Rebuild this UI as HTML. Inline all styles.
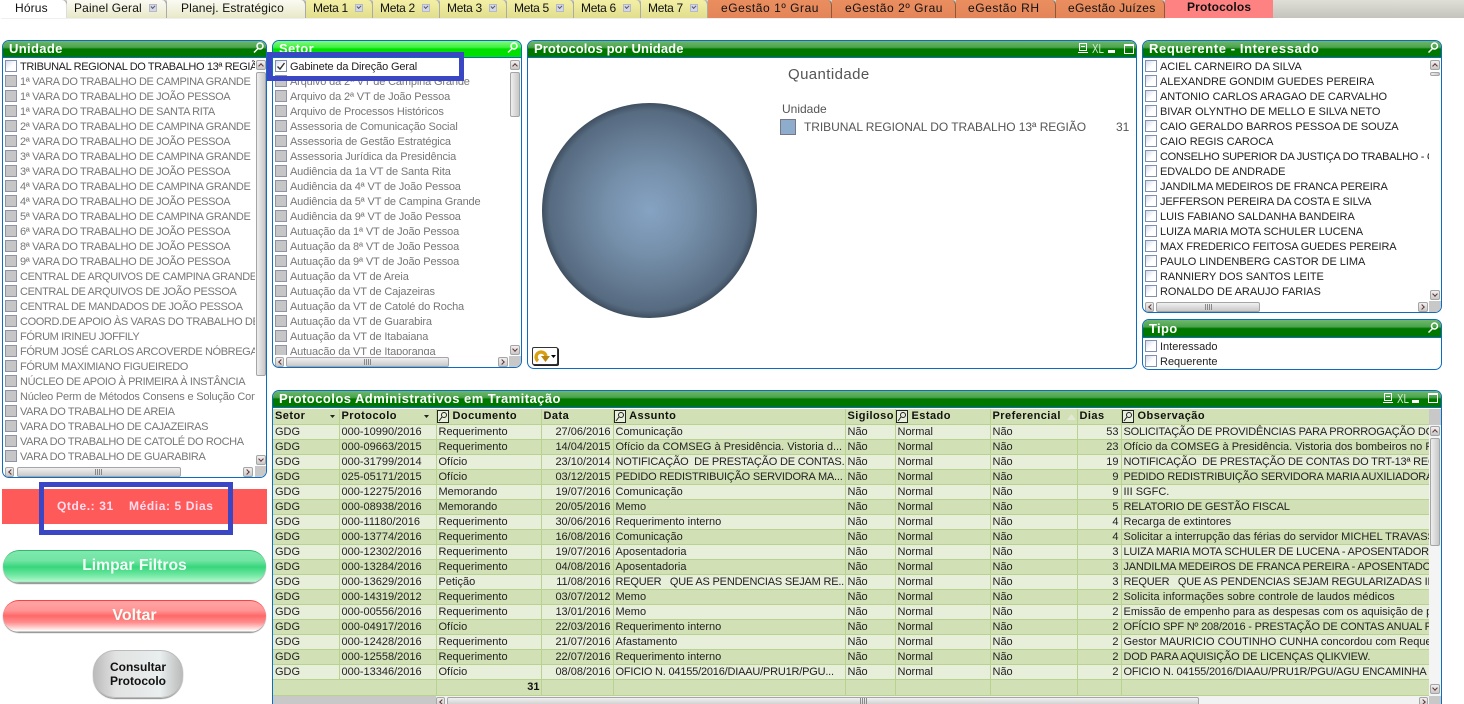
<!DOCTYPE html>
<html><head><meta charset="utf-8"><style>
html,body{margin:0;padding:0;width:1464px;height:704px;overflow:hidden;background:#fff;font-family:"Liberation Sans",sans-serif;font-size:11px;color:#222}
div{box-sizing:border-box}
.a{position:absolute}
.tab{position:absolute;top:0;height:18px;line-height:17px;font-size:12px;color:#111;white-space:nowrap;border-radius:0 5px 0 0;border-right:1px solid #aaa;box-shadow:1px 0 1px #999;letter-spacing:.15px}
.tab i{position:absolute;top:4px;width:8px;height:8px;background:#d4d8e6;border:1px solid #b4b8c8;box-sizing:border-box}
.tab i:after{content:"";position:absolute;left:1px;top:0;width:3px;height:2px;border-left:1px solid #556;border-bottom:1px solid #556;transform:rotate(-45deg)}
.p{background:linear-gradient(#fbfbf3,#e8e8c8)}.m{background:linear-gradient(#f3f0a6,#e2de8e);letter-spacing:-.3px}.e{background:linear-gradient(#ea8e60,#e38558);letter-spacing:.55px;border-right:1px solid #8a5a3a}
.panel{position:absolute;border:1px solid #0b6cc0;border-radius:7px;overflow:hidden;background:rgba(255,255,255,.9)}
.cap{position:absolute;left:0;right:0;top:0;height:17px;background:linear-gradient(#6db76d 0,#4ca34c 40%,#007800 50%,#007800 100%);border-bottom:1px solid #0b6cc0;color:#fff;font-weight:bold;font-size:13px;line-height:16px;padding-left:6px;letter-spacing:.35px;white-space:nowrap}
.cap.g{background:linear-gradient(#80fa80 0,#40f040 40%,#00e000 50%,#00e000 100%)}
.list{position:absolute;left:0;top:18px;overflow:hidden}
.r{position:relative;height:15px;line-height:16px;padding-left:17px;white-space:nowrap;color:#222}
.r:before{content:"";position:absolute;left:2px;top:1px;width:12px;height:12px;border:1px solid #7f8fae;background:linear-gradient(135deg,#d4daea,#fff 55%);box-sizing:border-box}
.x{color:#777}.x:before{background:#c6c6c6;border-color:#8c94a6}
.sb{position:absolute;background:linear-gradient(#f1f1f1,#c8c8c8);border:1px solid #a5a5a5;border-radius:2px}
.sv{position:absolute;background:linear-gradient(90deg,#eee,#c8c8c8);border:1px solid #a5a5a5;border-radius:2px}
.up:after,.dn:after,.lf:after,.rt:after{content:"";position:absolute;left:2px;top:3px;width:3px;height:3px;border-top:1px solid #633;border-left:1px solid #633}
.up:after{transform:rotate(45deg)}.dn:after{transform:rotate(225deg);top:1px}.lf:after{transform:rotate(-45deg);left:3px;top:2px}.rt:after{transform:rotate(135deg);left:1px;top:2px}
table{border-collapse:collapse;table-layout:fixed;position:absolute;left:0;top:18px;width:1156px}
td{height:15px;padding:0 1px 0 2px;overflow:hidden;white-space:pre;border-right:1px solid #b9d28f;border-bottom:1px solid #b9d28f;line-height:14px;color:#222;box-sizing:border-box}
tr:nth-child(even) td{background:#e7eed9}tr:nth-child(odd) td{background:#d2e0b5}
tr.h td{background:#d2e0b5;font-weight:bold;color:#111;letter-spacing:.45px}
tr.t td{background:#d2e0b5;height:16px;font-weight:bold;text-align:right;color:#111}
td.n{text-align:right;padding-right:2px}
td.u{letter-spacing:-.2px}
.blue{position:absolute;border:5px solid #3b46c4}
.btn{position:absolute;text-align:center;color:#f4fff8;font-size:15.7px;font-weight:bold;border-radius:17px;box-shadow:0 1px 1px #888}
</style></head><body>

<div class="a" style="left:0;top:0;width:1464px;height:18px;background:linear-gradient(#dfdfd8,#c4c4bc)"></div>
<div class="tab" style="left:0;width:67px;background:#fff;padding-left:15px;border-color:#ddd">Hórus</div>
<div class="tab p" style="left:67px;width:100px;padding-left:7px">Painel Geral<i style="left:82px"></i></div>
<div class="tab p" style="left:167px;width:139px;padding-left:14px">Planej. Estratégico</div>
<div class="tab m" style="left:306px;width:67px;padding-left:7px">Meta 1<i style="left:49px"></i></div>
<div class="tab m" style="left:373px;width:67px;padding-left:7px">Meta 2<i style="left:49px"></i></div>
<div class="tab m" style="left:440px;width:67px;padding-left:7px">Meta 3<i style="left:49px"></i></div>
<div class="tab m" style="left:507px;width:67px;padding-left:7px">Meta 5<i style="left:49px"></i></div>
<div class="tab m" style="left:574px;width:67px;padding-left:7px">Meta 6<i style="left:49px"></i></div>
<div class="tab m" style="left:641px;width:67px;padding-left:7px">Meta 7<i style="left:49px"></i></div>
<div class="tab e" style="left:708px;width:124px;padding-left:13px">eGestão 1º Grau</div>
<div class="tab e" style="left:832px;width:124px;padding-left:13px">eGestão 2º Grau</div>
<div class="tab e" style="left:956px;width:100px;padding-left:12px">eGestão RH</div>
<div class="tab e" style="left:1056px;width:109px;padding-left:12px;letter-spacing:.3px">eGestão Juízes</div>
<div class="tab" style="left:1165px;width:108px;background:#ff8282;padding-left:22px;font-weight:bold;border:0;box-shadow:none;border-radius:0;line-height:15px">Protocolos</div>

<!-- Unidade -->
<div class="panel" style="left:2px;top:40px;width:265px;height:438px">
<div class="cap">Unidade</div>
<div class="list" style="width:252px;height:408px;letter-spacing:-.38px">
<div class="r">TRIBUNAL REGIONAL DO TRABALHO 13ª REGIÃO</div>
<div class="r x">1ª VARA DO TRABALHO DE CAMPINA GRANDE</div>
<div class="r x">1ª VARA DO TRABALHO DE JOÃO PESSOA</div>
<div class="r x">1ª VARA DO TRABALHO DE SANTA RITA</div>
<div class="r x">2ª VARA DO TRABALHO DE CAMPINA GRANDE</div>
<div class="r x">2ª VARA DO TRABALHO DE JOÃO PESSOA</div>
<div class="r x">3ª VARA DO TRABALHO DE CAMPINA GRANDE</div>
<div class="r x">3ª VARA DO TRABALHO DE JOÃO PESSOA</div>
<div class="r x">4ª VARA DO TRABALHO DE CAMPINA GRANDE</div>
<div class="r x">4ª VARA DO TRABALHO DE JOÃO PESSOA</div>
<div class="r x">5ª VARA DO TRABALHO DE CAMPINA GRANDE</div>
<div class="r x">6ª VARA DO TRABALHO DE JOÃO PESSOA</div>
<div class="r x">8ª VARA DO TRABALHO DE JOÃO PESSOA</div>
<div class="r x">9ª VARA DO TRABALHO DE JOÃO PESSOA</div>
<div class="r x">CENTRAL DE ARQUIVOS DE CAMPINA GRANDE</div>
<div class="r x">CENTRAL DE ARQUIVOS DE JOÃO PESSOA</div>
<div class="r x">CENTRAL DE MANDADOS DE JOÃO PESSOA</div>
<div class="r x">COORD.DE APOIO ÀS VARAS DO TRABALHO DE</div>
<div class="r x">FÓRUM IRINEU JOFFILY</div>
<div class="r x">FÓRUM JOSÉ CARLOS ARCOVERDE NÓBREGA</div>
<div class="r x">FÓRUM MAXIMIANO FIGUEIREDO</div>
<div class="r x">NÚCLEO DE APOIO À PRIMEIRA À INSTÂNCIA</div>
<div class="r x" style="letter-spacing:-.2px">Núcleo Perm de Métodos Consens e Solução Con</div>
<div class="r x">VARA DO TRABALHO DE AREIA</div>
<div class="r x">VARA DO TRABALHO DE CAJAZEIRAS</div>
<div class="r x">VARA DO TRABALHO DE CATOLÉ DO ROCHA</div>
<div class="r x">VARA DO TRABALHO DE GUARABIRA</div>
</div>
<div class="sb up" style="left:253px;top:19px;width:10px;height:10px"></div>
<div class="sv" style="left:253px;top:31px;width:10px;height:304px"></div>
<div class="sb dn" style="left:253px;top:414px;width:10px;height:10px"></div>
<div class="sb lf" style="left:2px;top:426px;width:9px;height:10px"></div>
<div class="sb" style="left:14px;top:426px;width:164px;height:10px"></div>
<div class="sb rt" style="left:240px;top:426px;width:10px;height:10px"></div>
<div class="a" style="left:252px;top:425px;width:13px;height:13px;background:#c8c8c8"></div>
</div>

<!-- Setor -->
<div class="panel" style="left:272px;top:40px;width:250px;height:328px">
<div class="cap g">Setor</div>
<div class="list" style="width:236px;height:296px;letter-spacing:-.15px">
<div class="r">Gabinete da Direção Geral<svg class="a" style="left:3px;top:2px" width="10" height="10"><path d="M1.500 5.500l2.500 2.500L8.500 2" fill="none" stroke="#333" stroke-width="1.400"/></svg></div>
<div class="r x">Arquivo da 2ª VT de Campina Grande</div>
<div class="r x">Arquivo da 2ª VT de João Pessoa</div>
<div class="r x">Arquivo de Processos Históricos</div>
<div class="r x">Assessoria de Comunicação Social</div>
<div class="r x">Assessoria de Gestão Estratégica</div>
<div class="r x">Assessoria Jurídica da Presidência</div>
<div class="r x">Audiência da 1a VT de Santa Rita</div>
<div class="r x">Audiência da 4ª VT de João Pessoa</div>
<div class="r x">Audiência da 5ª VT de Campina Grande</div>
<div class="r x">Audiência da 9ª VT de João Pessoa</div>
<div class="r x">Autuação da 1ª VT de João Pessoa</div>
<div class="r x">Autuação da 8ª VT de João Pessoa</div>
<div class="r x">Autuação da 9ª VT de João Pessoa</div>
<div class="r x">Autuação da VT de Areia</div>
<div class="r x">Autuação da VT de Cajazeiras</div>
<div class="r x">Autuação da VT de Catolé do Rocha</div>
<div class="r x">Autuação da VT de Guarabira</div>
<div class="r x">Autuação da VT de Itabaiana</div>
<div class="r x">Autuação da VT de Itaporanga</div>
</div>
<div class="sb up" style="left:237px;top:19px;width:10px;height:10px"></div>
<div class="sv" style="left:237px;top:31px;width:10px;height:45px"></div>
<div class="sb dn" style="left:237px;top:304px;width:10px;height:10px"></div>
<div class="sb lf" style="left:2px;top:316px;width:9px;height:10px"></div>
<div class="sb" style="left:13px;top:316px;width:163px;height:10px"></div>
<div class="sb rt" style="left:225px;top:316px;width:10px;height:10px"></div>
<div class="a" style="left:236px;top:315px;width:13px;height:13px;background:#c8c8c8"></div>
</div>

<!-- Protocolos por Unidade -->
<div class="panel" style="left:527px;top:40px;width:610px;height:329px">
<div class="cap" style="letter-spacing:.1px">Protocolos por Unidade</div>
<div class="a" style="left:14px;top:62px;width:215px;height:215px;border-radius:50%;background:radial-gradient(circle closest-side at 50% 50%,#86a3c3 0,#7690ab 40%,#62788f 75%,#566a80 93%,#3f4f60 100%)"></div>
<div class="a" style="left:260px;top:25px;font-size:15px;color:#555;letter-spacing:.4px">Quantidade</div>
<div class="a" style="left:254px;top:61px;font-size:12px;color:#555">Unidade</div>
<div class="a" style="left:252px;top:78px;width:16px;height:16px;background:#8eaccc;border:1px solid #778"></div>
<div class="a" style="left:276px;top:79px;font-size:12px;color:#555;white-space:nowrap;letter-spacing:-.05px">TRIBUNAL REGIONAL DO TRABALHO 13ª REGIÃO</div>
<div class="a" style="left:588px;top:79px;font-size:12px;color:#555">31</div>
<div class="a" style="left:4px;top:306px;width:26px;height:18px;background:#fff;border:1px solid #333;border-radius:2px;box-shadow:1px 1px 0 #222"></div>
<svg class="a" style="left:5px;top:307px" width="24" height="17"><path d="M5 13a5 5 0 1 1 8-5" fill="none" stroke="#d9a012" stroke-width="3.400"/><path d="M8 8h9l-4.500 6z" fill="#b9850c"/><path d="M18 7h5l-2.500 3z" fill="#000"/></svg>
</div>

<!-- Requerente -->
<div class="panel" style="left:1142px;top:40px;width:300px;height:273px">
<div class="cap" style="letter-spacing:.6px">Requerente - Interessado</div>
<div class="list" style="width:286px;height:240px;letter-spacing:-.05px">
<div class="r">ACIEL CARNEIRO DA SILVA</div>
<div class="r">ALEXANDRE GONDIM GUEDES PEREIRA</div>
<div class="r">ANTONIO CARLOS ARAGAO DE CARVALHO</div>
<div class="r">BIVAR OLYNTHO DE MELLO E SILVA NETO</div>
<div class="r">CAIO GERALDO BARROS PESSOA DE SOUZA</div>
<div class="r">CAIO REGIS CAROCA</div>
<div class="r" style="letter-spacing:-.3px">CONSELHO SUPERIOR DA JUSTIÇA DO TRABALHO - CS...</div>
<div class="r">EDVALDO DE ANDRADE</div>
<div class="r" style="letter-spacing:-.15px">JANDILMA MEDEIROS DE FRANCA PEREIRA</div>
<div class="r" style="letter-spacing:-.15px">JEFFERSON PEREIRA DA COSTA E SILVA</div>
<div class="r">LUIS FABIANO SALDANHA BANDEIRA</div>
<div class="r">LUIZA MARIA MOTA SCHULER LUCENA</div>
<div class="r" style="letter-spacing:-.15px">MAX FREDERICO FEITOSA GUEDES PEREIRA</div>
<div class="r">PAULO LINDENBERG CASTOR DE LIMA</div>
<div class="r">RANNIERY DOS SANTOS LEITE</div>
<div class="r">RONALDO DE ARAUJO FARIAS</div>
</div>
<div class="sb up" style="left:287px;top:19px;width:10px;height:10px"></div>
<div class="sv" style="left:287px;top:31px;width:10px;height:4px"></div>
<div class="sb dn" style="left:287px;top:249px;width:10px;height:10px"></div>
<div class="sb lf" style="left:2px;top:261px;width:9px;height:10px"></div>
<div class="sb" style="left:13px;top:261px;width:104px;height:10px"></div>
<div class="sb rt" style="left:275px;top:261px;width:10px;height:10px"></div>
<div class="a" style="left:286px;top:260px;width:13px;height:13px;background:#c8c8c8"></div>
</div>

<!-- Tipo -->
<div class="panel" style="left:1142px;top:319px;width:300px;height:51px">
<div class="cap" style="height:18px;line-height:18px">Tipo</div>
<div class="list" style="width:298px;height:31px;top:19px">
<div class="r">Interessado</div>
<div class="r">Requerente</div>
</div>
</div>

<!-- Tabela -->
<div class="panel" style="left:272px;top:390px;width:1170px;height:314px;border-radius:7px 7px 0 0;border-bottom:0">
<div class="cap" style="letter-spacing:.45px">Protocolos Administrativos em Tramitação</div>
<table>
<colgroup><col style="width:66px"><col style="width:97px"><col style="width:105px"><col style="width:72px"><col style="width:232px"><col style="width:50px"><col style="width:95px"><col style="width:87px"><col style="width:44px"><col style="width:308px"></colgroup>
<tr class="h"><td>Setor</td><td>Protocolo</td><td>    Documento</td><td>Data</td><td>    Assunto</td><td>Sigiloso</td><td>    Estado</td><td>Preferencial</td><td>Dias</td><td>    Observação</td></tr>
<tr><td>GDG</td><td>000-10990/2016</td><td>Requerimento</td><td class="n">27/06/2016</td><td>Comunicação</td><td>Não</td><td>Normal</td><td>Não</td><td class="n">53</td><td class="u">SOLICITAÇÃO DE PROVIDÊNCIAS PARA PRORROGAÇÃO DO CONTRATO</td></tr>
<tr><td>GDG</td><td>000-09663/2015</td><td>Requerimento</td><td class="n">14/04/2015</td><td>Ofício da COMSEG à Presidência. Vistoria d...</td><td>Não</td><td>Normal</td><td>Não</td><td class="n">23</td><td>Ofício da COMSEG à Presidência. Vistoria dos bombeiros no Fórum</td></tr>
<tr><td>GDG</td><td>000-31799/2014</td><td>Ofício</td><td class="n">23/10/2014</td><td class="u">NOTIFICAÇÃO  DE PRESTAÇÃO DE CONTAS...</td><td>Não</td><td>Normal</td><td>Não</td><td class="n">19</td><td class="u">NOTIFICAÇÃO  DE PRESTAÇÃO DE CONTAS DO TRT-13ª REGIÃO</td></tr>
<tr><td>GDG</td><td>025-05171/2015</td><td>Ofício</td><td class="n">03/12/2015</td><td class="u">PEDIDO REDISTRIBUIÇÃO SERVIDORA MA...</td><td>Não</td><td>Normal</td><td>Não</td><td class="n">9</td><td class="u">PEDIDO REDISTRIBUIÇÃO SERVIDORA MARIA AUXILIADORA SOUZA</td></tr>
<tr><td>GDG</td><td>000-12275/2016</td><td>Memorando</td><td class="n">19/07/2016</td><td>Comunicação</td><td>Não</td><td>Normal</td><td>Não</td><td class="n">9</td><td>III SGFC.</td></tr>
<tr><td>GDG</td><td>000-08938/2016</td><td>Memorando</td><td class="n">20/05/2016</td><td>Memo</td><td>Não</td><td>Normal</td><td>Não</td><td class="n">5</td><td class="u">RELATORIO DE GESTÃO FISCAL</td></tr>
<tr><td>GDG</td><td>000-11180/2016</td><td>Requerimento</td><td class="n">30/06/2016</td><td>Requerimento interno</td><td>Não</td><td>Normal</td><td>Não</td><td class="n">4</td><td>Recarga de extintores</td></tr>
<tr><td>GDG</td><td>000-13774/2016</td><td>Requerimento</td><td class="n">16/08/2016</td><td>Comunicação</td><td>Não</td><td>Normal</td><td>Não</td><td class="n">4</td><td>Solicitar a interrupção das férias do servidor MICHEL TRAVASSOS</td></tr>
<tr><td>GDG</td><td>000-12302/2016</td><td>Requerimento</td><td class="n">19/07/2016</td><td>Aposentadoria</td><td>Não</td><td>Normal</td><td>Não</td><td class="n">3</td><td class="u">LUIZA MARIA MOTA SCHULER DE LUCENA - APOSENTADORIA</td></tr>
<tr><td>GDG</td><td>000-13284/2016</td><td>Requerimento</td><td class="n">04/08/2016</td><td>Aposentadoria</td><td>Não</td><td>Normal</td><td>Não</td><td class="n">3</td><td class="u">JANDILMA MEDEIROS DE FRANCA PEREIRA - APOSENTADORIA</td></tr>
<tr><td>GDG</td><td>000-13629/2016</td><td>Petição</td><td class="n">11/08/2016</td><td class="u">REQUER   QUE AS PENDENCIAS SEJAM RE...</td><td>Não</td><td>Normal</td><td>Não</td><td class="n">3</td><td class="u">REQUER   QUE AS PENDENCIAS SEJAM REGULARIZADAS IMEDIATAMENTE</td></tr>
<tr><td>GDG</td><td>000-14319/2012</td><td>Requerimento</td><td class="n">03/07/2012</td><td>Memo</td><td>Não</td><td>Normal</td><td>Não</td><td class="n">2</td><td style="letter-spacing:.1px">Solicita informações sobre controle de laudos médicos</td></tr>
<tr><td>GDG</td><td>000-00556/2016</td><td>Requerimento</td><td class="n">13/01/2016</td><td>Memo</td><td>Não</td><td>Normal</td><td>Não</td><td class="n">2</td><td>Emissão de empenho para as despesas com os aquisição de passagens</td></tr>
<tr><td>GDG</td><td>000-04917/2016</td><td>Ofício</td><td class="n">22/03/2016</td><td>Requerimento interno</td><td>Não</td><td>Normal</td><td>Não</td><td class="n">2</td><td class="u">OFÍCIO SPF Nº 208/2016 - PRESTAÇÃO DE CONTAS ANUAL REFERENTE</td></tr>
<tr><td>GDG</td><td>000-12428/2016</td><td>Requerimento</td><td class="n">21/07/2016</td><td>Afastamento</td><td>Não</td><td>Normal</td><td>Não</td><td class="n">2</td><td>Gestor MAURICIO COUTINHO CUNHA concordou com Requerimento</td></tr>
<tr><td>GDG</td><td>000-12558/2016</td><td>Requerimento</td><td class="n">22/07/2016</td><td>Requerimento interno</td><td>Não</td><td>Normal</td><td>Não</td><td class="n">2</td><td class="u">DOD PARA AQUISIÇÃO DE LICENÇAS QLIKVIEW.</td></tr>
<tr><td>GDG</td><td>000-13346/2016</td><td>Ofício</td><td class="n">08/08/2016</td><td class="u">OFICIO N. 04155/2016/DIAAU/PRU1R/PGU...</td><td>Não</td><td>Normal</td><td>Não</td><td class="n">2</td><td class="u">OFICIO N. 04155/2016/DIAAU/PRU1R/PGU/AGU ENCAMINHA CÓPIA</td></tr>
<tr class="t"><td colspan="2"></td><td>31</td><td></td><td></td><td></td><td></td><td></td><td></td><td></td></tr>
</table>
<div class="a" style="left:1156px;top:18px;width:13px;height:16px;background:#c8c8c8"></div>
<div class="a" style="left:0;top:305px;width:1169px;height:9px;background:#c8c8c8"></div>
<div class="a" style="left:1156px;top:34px;width:13px;height:271px;background:#f4f4f4"></div>
<div class="sb up" style="left:1157px;top:35px;width:10px;height:10px"></div>
<div class="sv" style="left:1157px;top:47px;width:10px;height:108px"></div>
<div class="sb dn" style="left:1157px;top:293px;width:10px;height:10px"></div>
<div class="a" style="left:163px;top:305px;width:993px;height:9px;background:#f2f2f2"></div>
<div class="sb lf" style="left:163px;top:306px;width:9px;height:10px"></div>
<div class="sb" style="left:174px;top:306px;width:752px;height:10px"></div>
<div class="sb rt" style="left:1146px;top:306px;width:9px;height:10px"></div>
</div>

<!-- caption icons -->
<svg class="a" style="left:0;top:0" width="1464" height="704">
<g fill="none" stroke="#fff" stroke-width="1.500">
<circle cx="260" cy="46" r="3"/><path d="M258 48.500l-4 4"/>
<circle cx="514" cy="46" r="3"/><path d="M512 48.500l-4 4"/>
<circle cx="1434.500" cy="46" r="3"/><path d="M1432.500 48.500l-4 4"/>
<circle cx="1434.500" cy="326" r="3"/><path d="M1432.500 328.500l-4 4"/>
</g>
<g fill="none" stroke="#fff" stroke-width="1">
<path d="M1079.500 43.500h7v7h-7zM1078 52.500h10M1081 46.500h4"/><path d="M1124.500 44.500h9v9h-9z"/>
<path d="M1384.500 393.500h7v7h-7zM1383 402.500h10M1386 396.500h4"/><path d="M1428.500 393.500h9v9h-9z"/>
</g>
<path d="M1124 44h10v2h-10zM1428 393h10v2h-10zM1108 50h7v3h-7zM1412 400h7v3h-7z" fill="#fff"/>
<g fill="#222"><path d="M330 415h5l-2.500 3zM424 415h5l-2.500 3z"/></g>
<path d="M1067 420l4.500-6 4.500 6z" fill="#e2e8d4"/>
<g fill="none" stroke="#222" stroke-width="1">
<path d="M437.500 410.500h11v12h-11zM614.500 410.500h11v12h-11zM896.500 410.500h11v12h-11zM1122.500 410.500h11v12h-11z" fill="#e8f0dc"/>
<circle cx="444" cy="415" r="2.500"/><path d="M442 417l-3 4"/>
<circle cx="621" cy="415" r="2.500"/><path d="M619 417l-3 4"/>
<circle cx="903" cy="415" r="2.500"/><path d="M901 417l-3 4"/>
<circle cx="1129" cy="415" r="2.500"/><path d="M1127 417l-3 4"/>
</g>
<g stroke="#888" stroke-width="1">
<path d="M95.500 469v6M97.500 469v6M99.500 469v6M101.500 469v6"/>
<path d="M364.500 359v6M366.500 359v6M368.500 359v6M370.500 359v6"/>
<path d="M1205.500 304v6M1207.500 304v6M1209.500 304v6M1211.500 304v6"/>
<path d="M860.500 698v6M862.500 698v6M864.500 698v6M866.500 698v6"/>
</g>
</svg>
<div class="a" style="left:1092px;top:41px;font-size:13px;color:#cfe8cf;transform:scaleX(.75);transform-origin:0 0">XL</div>
<div class="a" style="left:1397px;top:391px;font-size:13px;color:#cfe8cf;transform:scaleX(.75);transform-origin:0 0">XL</div>

<!-- Blue overlays -->
<div class="blue" style="left:267px;top:52px;width:197px;height:29px"></div>
<div class="a" style="left:2px;top:489px;width:265px;height:35px;background:#ff5a5a"></div>
<div class="blue" style="left:39px;top:482px;width:194px;height:53px"></div>
<div class="a" style="left:57px;top:499px;font-size:12px;font-weight:bold;color:#fde;letter-spacing:.6px;white-space:pre">Qtde.: 31</div>
<div class="a" style="left:129px;top:499px;font-size:12px;font-weight:bold;color:#fde;letter-spacing:.6px;white-space:pre">Média: 5 Dias</div>

<!-- Buttons -->
<div class="btn" style="left:3px;top:550px;width:263px;height:33px;line-height:30px;background:linear-gradient(#7fe9ae 0,#72e4a4 30%,#38d67c 50%,#70e8a2 75%,#b0f8cc 95%,#888 100%);border-top:1px solid #2fb86e">Limpar Filtros</div>
<div class="btn" style="left:3px;top:600px;width:263px;height:32px;line-height:29px;font-size:16px;background:linear-gradient(#ffa5a5 0,#ff9696 30%,#ff6868 48%,#ff9090 70%,#fff 97%,#888 100%);border-top:1px solid #ff4040">Voltar</div>
<div class="btn" style="left:93px;top:650px;width:90px;height:48px;border-radius:22px;background:linear-gradient(90deg,#bbb,#e2e2e2 25%,#e9eeee 75%,#bbb);border:1px solid #bbb;color:#111;font-size:12px;line-height:14px;padding-top:9px">Consultar<br>Protocolo</div>

</body></html>
